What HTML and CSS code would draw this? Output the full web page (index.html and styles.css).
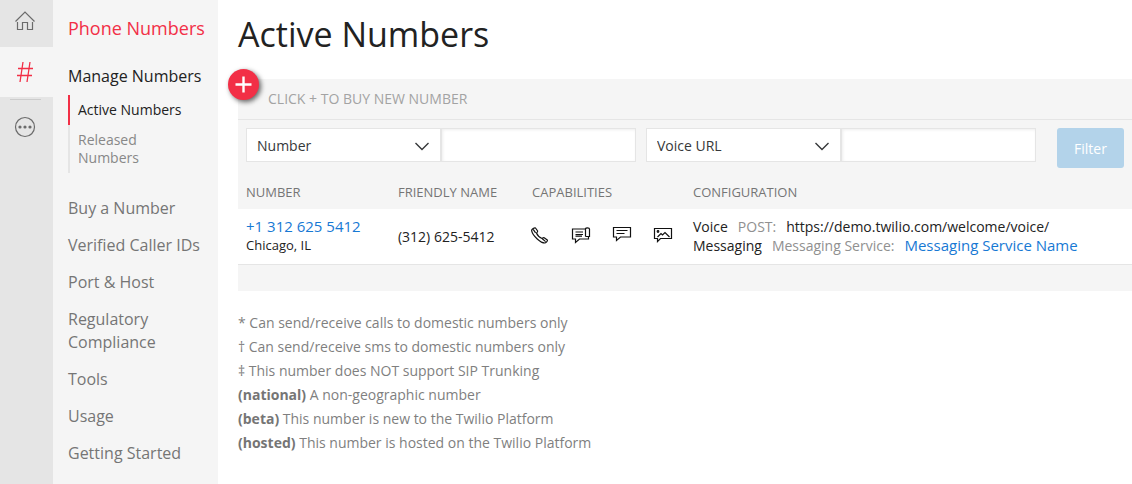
FILE: index.html
```html
<!DOCTYPE html>
<html lang="en">
<head>
    <meta charset="UTF-8">
    <meta name="viewport" content="width=device-width, initial-scale=1.0">
    <title>Active Numbers</title>
    <link rel="stylesheet" href="styles.css">
</head>
<body>
    <div class="app">
        <!-- icon rail -->
        <nav class="rail" aria-label="Products">
            <a href="#" class="rail-link" aria-label="Home">
                <svg width="22" height="22" viewBox="0 0 22 22" fill="none" stroke="#6b6b6b" stroke-width="1.2">
                    <path d="M1.5 11.5 L11 2 L20.500 11.500"/>
                    <path d="M3.500 12 V19.500 H8.500 V12.500 H13.500 V19.500 H18.500 V12"/>
                </svg>
            </a>
            <a href="#" class="rail-link current" aria-label="Phone Numbers">
                <svg width="22" height="22" viewBox="0 0 22 22" fill="none" stroke="#f22f46" stroke-width="1.3">
                    <path d="M9 1 L6 21 M16 1 L13 21 M4 7.500 H19 M3 14.500 H18"/>
                </svg>
            </a>
            <hr class="rail-line">
            <a href="#" class="rail-link more" aria-label="All products">
                <svg width="22" height="22" viewBox="0 0 22 22">
                    <circle cx="11" cy="11" r="9.500" fill="none" stroke="#6b6b6b" stroke-width="1.2"/>
                    <circle cx="6" cy="11" r="1.600" fill="#6b6b6b"/>
                    <circle cx="11" cy="11" r="1.600" fill="#6b6b6b"/>
                    <circle cx="16" cy="11" r="1.600" fill="#6b6b6b"/>
                </svg>
            </a>
        </nav>

        <!-- section menu -->
        <nav class="sidebar" aria-label="Phone Numbers">
            <a href="#" class="sidebar-title">Phone Numbers</a>
            <ul class="menu">
                <li>
                    <a href="#" class="open">Manage Numbers</a>
                    <ul class="submenu">
                        <li class="selected"><a href="#">Active Numbers</a></li>
                        <li><a href="#">Released Numbers</a></li>
                    </ul>
                </li>
                <li><a href="#">Buy a Number</a></li>
                <li><a href="#">Verified Caller IDs</a></li>
                <li><a href="#">Port &amp; Host</a></li>
                <li><a href="#">Regulatory Compliance</a></li>
                <li><a href="#">Tools</a></li>
                <li><a href="#">Usage</a></li>
                <li><a href="#">Getting Started</a></li>
            </ul>
        </nav>

        <main class="content">
            <h1>Active Numbers</h1>

            <section class="panel">
                <div class="buy-bar">
                    <button type="button" class="buy-btn" aria-label="Buy new number">
                        <svg width="17" height="17" viewBox="0 0 17 17" stroke="#fff" stroke-width="2.4">
                            <path d="M8.500 0.500 V16.500 M0.500 8.500 H16.500"/>
                        </svg>
                    </button>
                    <span>CLICK + TO BUY NEW NUMBER</span>
                </div>

                <form class="filters">
                    <div class="filter">
                        <div class="select-box">
                            <select aria-label="First filter">
                                <option>Number</option>
                                <option>Friendly Name</option>
                            </select>
                            <svg class="chevron" width="14" height="9" viewBox="0 0 14 9" fill="none" stroke="#36383a" stroke-width="1.4">
                                <path d="M0.500 1 L7 7.500 L13.500 1"/>
                            </svg>
                        </div>
                        <input type="text" aria-label="First filter value">
                    </div>
                    <div class="filter">
                        <div class="select-box">
                            <select aria-label="Second filter">
                                <option>Voice URL</option>
                                <option>SMS URL</option>
                            </select>
                            <svg class="chevron" width="14" height="9" viewBox="0 0 14 9" fill="none" stroke="#36383a" stroke-width="1.4">
                                <path d="M0.500 1 L7 7.500 L13.500 1"/>
                            </svg>
                        </div>
                        <input type="text" aria-label="Second filter value">
                    </div>
                    <button type="submit" class="filter-btn">Filter</button>
                </form>

                <table class="numbers">
                    <thead>
                        <tr>
                            <th class="col-number">NUMBER</th>
                            <th class="col-name">FRIENDLY NAME</th>
                            <th class="col-caps">CAPABILITIES</th>
                            <th>CONFIGURATION</th>
                        </tr>
                    </thead>
                    <tbody>
                        <tr>
                            <td>
                                <a href="#" class="link">+1 312 625 5412</a>
                                <div class="place">Chicago, IL</div>
                            </td>
                            <td>(312) 625-5412</td>
                            <td>
                                <div class="caps">
                                    <!-- voice -->
                                    <svg width="20" height="20" viewBox="0 0 20 20" role="img" aria-label="Voice">
                                        <path d="M5.500 2 L7.600 5 C7.900 6 7 6.400 6.500 7 C7.400 9.300 9.600 11.500 12 12.500 C12.700 12 13.300 11.200 14.200 11.700 L17.300 14 C18 14.700 16.200 16.900 15 17 C11 17.200 2.800 10.200 1.600 4.700 C1.500 3.500 4.500 1.200 5.500 2 Z"/>
                                        <path d="M3.200 3.300 L5.600 6.800 M12.300 12.800 L15.600 15.600"/>
                                    </svg>
                                    <!-- fax -->
                                    <svg width="20" height="20" viewBox="0 0 20 20" role="img" aria-label="Fax">
                                        <path d="M14.500 3 H1.500 V13 H4.500 V16.500 L8.500 13 H17.500 V11"/>
                                        <path d="M14.500 10.500 V3 C14.500 1.500 18.500 1.500 18.500 3 V10.500 H14.500"/>
                                        <path d="M4.500 6 H12 M4.500 8.500 H12 M4.500 10.200 H11"/>
                                    </svg>
                                    <!-- sms -->
                                    <svg width="20" height="20" viewBox="0 0 20 20" role="img" aria-label="SMS">
                                        <path d="M1.500 1.500 H18.500 V11 H8.500 L4.500 14.500 V11 H1.500 Z"/>
                                        <path d="M4.500 4.500 H15.500 M4.500 7.500 H12.500"/>
                                    </svg>
                                    <!-- mms -->
                                    <svg width="20" height="20" viewBox="0 0 20 20" role="img" aria-label="MMS">
                                        <path d="M1.500 2.500 H18.500 V12.500 H7.500 L4.500 15.500 V12.500 H1.500 Z"/>
                                        <path d="M4.500 11 L8 7.500 L9.500 9 L12 6.500 L16.500 11"/>
                                        <circle cx="5" cy="5.500" r="0.800"/>
                                    </svg>
                                </div>
                            </td>
                            <td>
                                <div class="config">
                                    <span>Voice</span>
                                    <span class="muted">POST:</span>
                                    <span>https://demo.twilio.com/welcome/voice/</span>
                                </div>
                                <div class="config">
                                    <span>Messaging</span>
                                    <span class="muted">Messaging Service:</span>
                                    <a href="#" class="link">Messaging Service Name</a>
                                </div>
                            </td>
                        </tr>
                    </tbody>
                </table>
            </section>

            <div class="legend">
                <p>* Can send/receive calls to domestic numbers only</p>
                <p>† Can send/receive sms to domestic numbers only</p>
                <p>‡ This number does NOT support SIP Trunking</p>
                <p><strong>(national)</strong> A non-geographic number</p>
                <p><strong>(beta)</strong> This number is new to the Twilio Platform</p>
                <p><strong>(hosted)</strong> This number is hosted on the Twilio Platform</p>
            </div>
        </main>
    </div>
</body>
</html>
```
FILE: styles.css
```css
/* global styles */
* {
    margin: 0;
    padding: 0;
    box-sizing: border-box;
}

body {
    background: #fff;
    color: #222;
    font-family: 'Open Sans', 'Noto Sans', sans-serif;
    font-size: 14px;
    line-height: 19px;
}

a {
    color: inherit;
    text-decoration: none;
}

ul {
    list-style: none;
}

select,
input,
button {
    font-family: inherit;
    font-size: 14px;
}

.app {
    display: flex;
    min-height: 100vh;
}

/* icon rail */
.rail {
    flex: 0 0 53px;
    background: #e5e5e5;
}

.rail-link {
    display: flex;
    justify-content: center;
    align-items: center;
    height: 50px;
    padding-right: 3px;
}

.rail-link:first-child {
    height: 47px;
    padding-bottom: 6px;
}

.rail-link.current {
    background: #f5f5f5;
}

.rail-line {
    margin: 2px 12px 0 10px;
    border: none;
    border-top: 1px solid #ccc;
}

.rail-link.more {
    height: 54px;
}

/* section menu */
.sidebar {
    flex: 0 0 165px;
    min-width: 0;
    padding: 16px 15px;
    background: #f5f5f5;
    color: #757575;
    font-size: 16px;
    line-height: 23px;
}

.sidebar-title {
    display: block;
    margin-bottom: 25px;
    color: #f22f46;
    font-size: 18px;
    line-height: 24px;
    white-space: nowrap;
}

.menu > li {
    margin-bottom: 14px;
}

.menu .open {
    color: #222;
    white-space: nowrap;
}

.submenu {
    margin: 7px 0 24px;
    font-size: 14px;
    line-height: 18px;
    color: #888;
}

.submenu li {
    padding: 6px 24px 6px 8px;
    border-left: 2px solid #e5e5e5;
}

.submenu .selected {
    border-color: #f22f46;
    color: #222;
    white-space: nowrap;
}

/* main area */
.content {
    flex: 1;
    min-width: 0;
    padding-left: 20px;
}

h1 {
    padding: 13px 0 24px;
    font-size: 34px;
    font-weight: 400;
    line-height: 42px;
}

.panel {
    padding-bottom: 26px;
    background: #f5f5f5;
}

.buy-bar {
    position: relative;
    padding: 10px 30px;
    border-bottom: 1px solid #e5e5e5;
    color: #a3a3a3;
    line-height: 20px;
}

/* round button hangs over the panel corner */
.buy-btn {
    position: absolute;
    top: -10px;
    left: -10px;
    display: flex;
    justify-content: center;
    align-items: center;
    width: 31px;
    height: 31px;
    border: none;
    border-radius: 50%;
    background: #f22f46;
    box-shadow: 2px 2px 5px rgba(0, 0, 0, 0.6);
    cursor: pointer;
}

/* filters */
.filters {
    display: flex;
    align-items: flex-start;
    gap: 10px;
    padding: 8px 8px 7px;
}

.filter {
    flex: 1;
    display: flex;
    min-width: 0;
}

.select-box {
    position: relative;
    width: 50%;
}

.select-box select {
    display: block;
    appearance: none;
    width: 100%;
    height: 34px;
    padding: 0 32px 0 10px;
    border: 1px solid #e5e5e5;
    border-radius: 0;
    background: #fff;
    color: #36383a;
}

.chevron {
    position: absolute;
    top: 14px;
    right: 12px;
    pointer-events: none;
}

.filter input {
    width: 50%;
    height: 34px;
    padding: 0 10px;
    border: 1px solid #e5e5e5;
    box-shadow: inset 1px 1px 3px #eee;
}

.filter-btn {
    width: 67px;
    height: 40px;
    margin-left: 11px;
    border: none;
    border-radius: 3px;
    background: #b3d3ea;
    color: #fff;
    cursor: pointer;
}

/* numbers table */
.numbers {
    width: 100%;
    border-collapse: collapse;
    table-layout: fixed;
}

.col-number {
    width: 17%;
}

.col-name {
    width: 15%;
}

.col-caps {
    width: 18%;
}

.numbers th {
    padding: 8px 8px 7px;
    color: #757575;
    font-size: 13px;
    font-weight: 400;
    text-align: left;
    white-space: nowrap;
}

.numbers td {
    padding: 8px 8px 9px;
    border-bottom: 1px solid #e5e5e5;
    background: #fff;
    vertical-align: middle;
    white-space: nowrap;
}

.link {
    color: #1779d4;
    font-size: 15px;
}

.place {
    font-size: 13px;
}

.caps {
    display: flex;
    gap: 21px;
    margin-left: -2px;
}

.caps svg {
    fill: none;
    stroke: #111;
    stroke-width: 1.2;
}

.config {
    display: flex;
    gap: 10px;
}

.muted {
    color: #909090;
}

/* legend */
.legend {
    padding-top: 20px;
    color: #7f7f7f;
    line-height: 24px;
}

.legend strong {
    color: #757575;
    font-weight: 700;
}
```
